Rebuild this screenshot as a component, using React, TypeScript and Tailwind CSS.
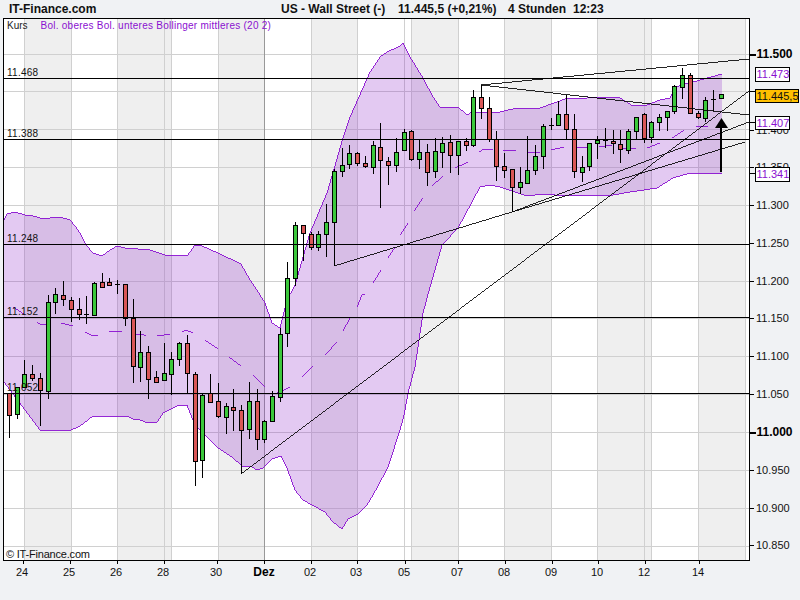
const candles: [number, number, number, number, number, string][] = [
  [9, 393, 438, 393, 415, "r"], [17, 387, 419, 387, 414, "g"], [24, 360, 387, 374, 387, "g"], [32, 365, 381, 374, 378, "r"],
  [40, 373, 426, 378, 390, "r"], [48, 295, 399, 302, 391, "g"], [55, 288, 314, 294, 302, "g"], [63, 281, 306, 295, 299, "r"],
  [71, 297, 322, 300, 309, "r"], [79, 298, 320, 309, 314, "r"], [86, 296, 324, 314, 315, "k"], [94, 282, 315, 283, 315, "g"],
  [102, 273, 288, 282, 287, "r"], [109, 278, 285, 282, 285, "r"], [117, 280, 294, 284, 285, "k"], [125, 284, 326, 284, 318, "r"],
  [133, 299, 383, 318, 366, "r"], [140, 331, 382, 352, 367, "g"], [148, 346, 399, 352, 379, "r"], [156, 371, 382, 377, 382, "r"],
  [164, 343, 380, 373, 380, "g"], [171, 352, 395, 359, 374, "g"], [179, 342, 366, 343, 359, "g"], [187, 335, 393, 343, 373, "r"],
  [195, 372, 486, 374, 461, "r"], [202, 394, 478, 395, 460, "g"], [210, 374, 403, 393, 402, "r"], [218, 383, 418, 401, 416, "r"],
  [226, 403, 434, 406, 417, "g"], [233, 389, 431, 407, 410, "r"], [241, 405, 474, 410, 430, "r"], [249, 382, 439, 401, 429, "g"],
  [257, 389, 450, 401, 439, "r"], [264, 420, 443, 421, 439, "g"], [272, 391, 421, 396, 421, "g"], [280, 328, 402, 334, 397, "g"],
  [287, 262, 347, 278, 333, "g"], [295, 222, 286, 225, 278, "g"], [303, 225, 261, 225, 233, "r"], [311, 232, 250, 234, 247, "r"],
  [318, 231, 251, 234, 247, "g"], [326, 204, 257, 222, 234, "g"], [334, 169, 266, 171, 222, "g"], [342, 148, 177, 165, 171, "g"],
  [349, 145, 169, 153, 164, "g"], [357, 152, 166, 153, 163, "r"], [365, 156, 168, 163, 166, "r"], [373, 141, 174, 145, 167, "g"],
  [380, 123, 208, 147, 160, "r"], [388, 157, 185, 161, 165, "r"], [396, 138, 172, 152, 165, "g"], [404, 129, 150, 132, 150, "g"],
  [411, 130, 161, 131, 159, "r"], [419, 139, 169, 152, 159, "g"], [427, 144, 186, 152, 172, "r"], [435, 138, 178, 151, 171, "g"],
  [442, 137, 168, 143, 152, "g"], [450, 135, 173, 142, 155, "r"], [458, 141, 175, 141, 155, "g"], [466, 138, 151, 141, 145, "r"],
  [473, 90, 147, 97, 145, "g"], [481, 85, 119, 97, 108, "r"], [489, 97, 142, 108, 139, "r"], [496, 131, 181, 139, 166, "r"],
  [504, 153, 178, 166, 170, "r"], [512, 169, 212, 169, 187, "r"], [520, 167, 194, 182, 187, "g"], [527, 136, 184, 170, 183, "g"],
  [535, 145, 175, 156, 170, "g"], [543, 124, 169, 126, 156, "g"], [551, 118, 130, 125, 126, "k"], [558, 101, 125, 114, 125, "g"],
  [566, 95, 139, 114, 129, "r"], [574, 114, 178, 129, 171, "r"], [582, 156, 182, 167, 172, "g"], [589, 143, 171, 143, 166, "g"],
  [597, 136, 159, 140, 143, "g"], [605, 128, 148, 140, 141, "k"], [613, 130, 154, 141, 143, "r"], [620, 130, 163, 144, 149, "r"],
  [628, 129, 154, 131, 150, "g"], [636, 117, 140, 117, 131, "g"], [644, 113, 143, 114, 138, "r"], [651, 121, 143, 122, 137, "g"],
  [659, 114, 131, 117, 122, "g"], [667, 111, 131, 111, 117, "g"], [674, 85, 114, 86, 111, "g"], [682, 68, 99, 75, 87, "g"],
  [690, 73, 114, 75, 113, "r"], [698, 111, 119, 113, 117, "r"], [705, 97, 122, 100, 118, "g"], [713, 90, 111, 99, 100, "k"],
  [721, 94, 99, 94, 98, "g"],
];

const upper = "4,220 7,214 15,212 25,215 33,216 40,218 50,218 60,217 70,220 75,226 80,233 86,245 93,253 102,256 110,250 117,246 125,248 150,250 165,255 187,256 195,245 200,245 220,254 241,264 250,280 257,290 265,303 272,323 280,328 287,300 295,285 310,233 327,193 343,138 350,117 370,72 380,57 387,52 400,46 403,43 410,57 415,65 423,78 433,97 440,107 458,107 467,115 472,112 482,113 500,112 517,108 537,109 557,102 567,98 587,98 607,97 620,98 633,106 647,105 660,100 670,98 675,88 683,84 693,82 707,78 722,74";
const lower = "722,174 690,173 673,178 657,188 630,192 613,195 567,196 543,194 527,196 500,187 490,185 480,187 458,228 442,245 427,298 423,313 415,367 408,393 404,415 400,430 388,467 377,488 367,505 358,514 348,519 342,529 333,522 325,512 303,500 295,490 287,468 281,456 272,459 263,468 257,470 250,466 242,466 233,458 217,447 203,433 195,425 187,405 177,406 163,413 157,422 148,423 140,420 133,419 127,416 117,416 93,416 80,426 71,430 40,430 4,382";

const middle = [
  "13,307 25,315", "37,322 41,325 50,324", "61,323 73,326", "85,332 91,335 98,335", "109,332 113,331 122,331", "133,334 141,334 146,336",
  "157,336 170,334", "182,332 186,330 193,333", "205,340 218,349", "229,357 241,366", "253,375 265,387", "277,392 280,392 290,387",
  "302,377 313,366", "325,355 337,342", "343,331 350,318", "357,307 362,295 365,294", "373,283 381,270", "388,258 395,247", "400,235 408,223",
  "414,211 423,198", "432,186 443,176", "455,168 468,162", "479,152 482,150 493,149", "503,150 516,151", "527,152 540,152", "551,150 564,147",
  "575,147 588,147", "599,147 612,145", "623,149 636,148", "647,148 660,143", "672,138 684,130", "696,127 708,126",
];

const grayBands = [[24, 71], [117, 171], [218, 264], [311, 357], [411, 458], [504, 551], [597, 651], [698, 745]];
const vLines = [24, 71, 117, 164, 171, 218, 311, 357, 404, 411, 458, 504, 551, 597, 644, 651, 698, 745];
const hGrid = [54, 91, 129, 167, 205, 244, 281, 318, 356, 394, 432, 470, 508, 546];
const hBlack = [78, 139, 244, 317, 393];
const lines = [
  [241, 474, 749, 91], [334, 266, 512, 212], [512, 212, 749, 122], [512, 212, 745, 142], [481, 85, 749, 59], [481, 85, 749, 115], [481, 85, 481, 95],
];
const yLabels: [string, number, boolean?][] = [
  ["11.500", 54, true], ["11.400", 130], ["11.350", 167], ["11.300", 205], ["11.250", 243], ["11.200", 281], ["11.150", 318], ["11.100", 356],
  ["11.050", 394], ["11.000", 432, true], ["10.950", 470], ["10.900", 508], ["10.850", 545],
];
const xLabels: [string, number, boolean?][] = [
  ["24", 22], ["25", 69], ["26", 116], ["28", 163], ["30", 216], ["Dez", 264, true], ["02", 310], ["03", 356], ["05", 404], ["07", 457],
  ["08", 504], ["09", 551], ["10", 597], ["12", 644], ["14", 698],
];
const levels: [string, number][] = [["11.468", 76], ["11.388", 137], ["11.248", 242], ["11.152", 315], ["11.052", 391]];
const boxes: [string, number, number, number, string][] = [
  ["11.473", 67, 14, 35, "#ffffff"], ["11.445,5", 89, 13, 44, "#ffc000"], ["11.407", 116, 13, 35, "#ffffff"], ["11.341", 167, 14, 35, "#ffffff"],
];
const fills: Record<string, string> = { r: "#d95757", g: "#3cc83c", k: "#000000" };

export default function App() {
  return (
    <div className="w-[800px] h-[600px] overflow-hidden bg-[#f0f2f4] font-['Liberation_Sans',Arial,sans-serif] text-[#111]">
      <div className="h-[18px] flex items-center text-[12px] font-bold leading-none whitespace-nowrap">
        <span className="ml-[9px] w-[272px]">IT-Finance.com</span>
        <span className="w-[117px]">US - Wall Street (-)</span>
        <span className="w-[110px]">11.445,5 (+0,21%)</span>
        <span className="w-[65px]">4 Stunden</span>
        <span>12:23</span>
      </div>
      <svg width={800} height={582} viewBox="0 18 800 582" className="block">
        <rect x={4} y={19} width={745} height={541} fill="#ffffff" shapeRendering="crispEdges" />
        {grayBands.map(([a, b]) => (
          <rect key={a} x={a} y={19} width={b - a} height={541} fill="#efefef" shapeRendering="crispEdges" />
        ))}
        {hGrid.map((y) => (
          <line key={y} x1={4} x2={749} y1={y + 0.5} y2={y + 0.5} stroke="#d0d0d0" shapeRendering="crispEdges" />
        ))}
        {vLines.map((x) => (
          <line key={x} x1={x + 0.5} x2={x + 0.5} y1={19} y2={560} stroke="#d0d0d0" shapeRendering="crispEdges" />
        ))}
        <line x1={264.5} x2={264.5} y1={19} y2={560} stroke="#999999" shapeRendering="crispEdges" />

        <polygon points={`${upper} ${lower}`} fill="#8c1ec8" fillOpacity={0.24} />
        <polyline points={upper} fill="none" stroke="#8a0fd0" strokeWidth={0.9} shapeRendering="crispEdges" />
        <polyline points={lower} fill="none" stroke="#8a0fd0" strokeWidth={0.9} shapeRendering="crispEdges" />
        {middle.map((p) => (
          <polyline key={p} points={p} fill="none" stroke="#8a0fd0" strokeWidth={0.9} shapeRendering="crispEdges" />
        ))}

        {candles.map(([x, hi, lo, top, bot, c]) => (
          <g key={x} shapeRendering="crispEdges">
            <line x1={x + 0.5} x2={x + 0.5} y1={hi} y2={lo} stroke="#000000" />
            {c === "k" ? (
              <line x1={x - 2} x2={x + 3} y1={top + 0.5} y2={top + 0.5} stroke="#000000" />
            ) : (
              <rect x={x - 1.5} y={top + 0.5} width={4} height={bot - top} fill={fills[c]} stroke="#000000" />
            )}
          </g>
        ))}

        {hBlack.map((y) => (
          <line key={y} x1={4} x2={749} y1={y + 0.5} y2={y + 0.5} stroke="#000000" shapeRendering="crispEdges" />
        ))}
        {lines.map(([a, b, c, d]) => (
          <line key={`${a}-${b}-${c}-${d}`} x1={a} y1={b} x2={c} y2={d} stroke="#000000" strokeWidth={0.85} shapeRendering="crispEdges" />
        ))}

        <line x1={721} x2={721} y1={127} y2={172} stroke="#000000" strokeWidth={2} shapeRendering="crispEdges" />
        <polygon points="721.5,118 728,128 715,128" fill="#000000" />

        <rect x={3.5} y={18.5} width={746} height={542} fill="none" stroke="#000000" shapeRendering="crispEdges" />

        <text x={7} y={29} className="text-[10px] fill-[#222]">Kurs</text>
        <text x={40.5} y={29} className="text-[10px] fill-[#8a0fd0] tracking-[0.25px]">Bol. oberes Bol. unteres Bollinger mittleres (20 2)</text>
        {levels.map(([t, y]) => (
          <text key={t} x={7} y={y} className="text-[10px] fill-[#111] tracking-[0.25px]">{t}</text>
        ))}
        <text x={6} y={558} className="text-[11px] fill-[#111] tracking-[-0.2px]">© IT-Finance.com</text>

        {yLabels.map(([t, y, bold]) => (
          <g key={t}>
            <line x1={749} x2={bold ? 756 : 754} y1={y + 0.5} y2={y + 0.5} stroke="#000000" strokeWidth={bold ? 2 : 1} shapeRendering="crispEdges" />
            <text x={bold ? 756.5 : 756} y={y + 4} className={bold ? "text-[12px] font-bold fill-[#000]" : "text-[11px] fill-[#111]"}>{t}</text>
          </g>
        ))}
        {xLabels.map(([t, x, bold]) => (
          <g key={t}>
            <line x1={x + (t === "Dez" ? 0.5 : 1.5)} x2={x + (t === "Dez" ? 0.5 : 1.5)} y1={560} y2={564} stroke="#000000" shapeRendering="crispEdges" />
            <text x={x} y={576} textAnchor="middle" className={bold ? "text-[12px] font-bold fill-[#000]" : "text-[11px] fill-[#111]"}>{t}</text>
          </g>
        ))}

        <line x1={749} x2={755} y1={91.5} y2={91.5} stroke="#000000" shapeRendering="crispEdges" />
        <line x1={749} x2={755} y1={122.5} y2={122.5} stroke="#000000" shapeRendering="crispEdges" />
        <line x1={749} x2={755} y1={173.5} y2={173.5} stroke="#000000" shapeRendering="crispEdges" />
        {boxes.map(([t, y, h, w, bg]) => (
          <g key={t}>
            <rect x={755.5} y={y + 0.5} width={w - 1} height={h} fill={bg} stroke="#000000" shapeRendering="crispEdges" />
            <text x={756.5} y={y + 11} className={bg === "#ffffff" ? "text-[11px] fill-[#8a0fd0]" : "text-[11px] fill-[#111]"}>{t}</text>
          </g>
        ))}
      </svg>
    </div>
  );
}
